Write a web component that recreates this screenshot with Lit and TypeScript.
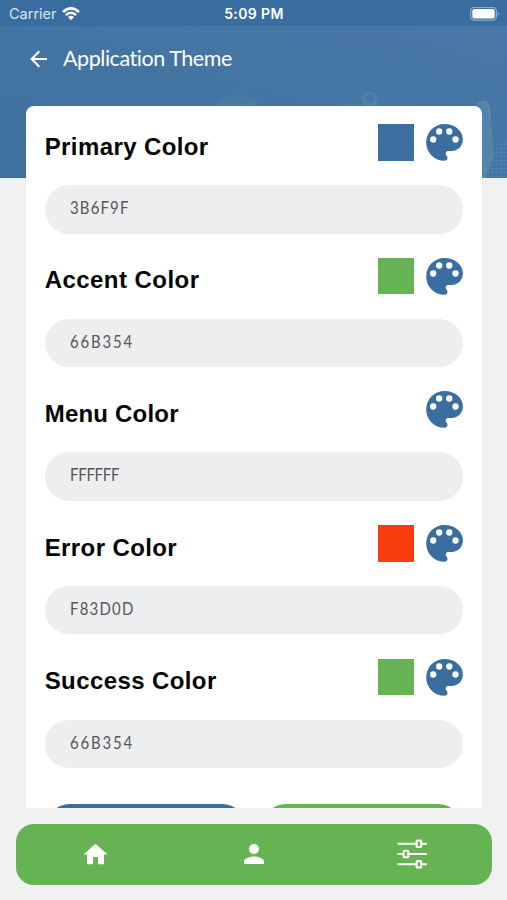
import { LitElement, html, css, svg } from "lit";
import { customElement, property } from "lit/decorators.js";

interface ColorField {
  label: string;
  value: string;
  spacing: number;
  valueSpacing: number;
}

const FIELDS: ColorField[] = [
  { label: "Primary Color", value: "3B6F9F", spacing: 0.4, valueSpacing: 1.3 },
  { label: "Accent Color", value: "66B354", spacing: 0.45, valueSpacing: 2.1 },
  { label: "Menu Color", value: "FFFFFF", spacing: 0.2, valueSpacing: -0.3 },
  { label: "Error Color", value: "F83D0D", spacing: 0.4, valueSpacing: 1.4 },
  { label: "Success Color", value: "66B354", spacing: 0.4, valueSpacing: 2.1 },
];

@customElement("color-field")
class ColorFieldRow extends LitElement {
  @property({ attribute: false }) field!: ColorField;

  static styles = css`
    :host { display: block; height: 133.6px; }
    .head { display: flex; align-items: flex-start; height: 61px; }
    .label {
      flex: 1; margin: 0; padding-top: 8.6px; white-space: nowrap;
      font: bold 24px/28px "Liberation Sans", Arial, sans-serif; color: #050505;
    }
    .swatch { width: 36.6px; height: 36.6px; margin-right: 12.2px; }
    .palette { display: block; width: 37px; height: 37px; fill: #3a6ea0; }
    .palette circle { fill: #fff; }
    .value {
      box-sizing: border-box; height: 48.4px; border-radius: 24.2px;
      background: #edeeef; padding: 11px 25px 0;
      font: 17px/24px Lato, sans-serif; color: #56575a;
    }
    .value span { display: inline-block; transform: scaleX(0.88); transform-origin: left; }
  `;

  render() {
    const f = this.field;
    return html`
      <div class="head">
        <h2 class="label" style="letter-spacing:${f.spacing}px">${f.label}</h2>
        <div class="swatch" style="background:#${f.value}"></div>
        <svg class="palette" viewBox="0 0 37 37">
          <path d="M18.5 0C28.8 0 36.9 6.6 36.9 15.5C36.9 22 32 26.9 25.7 26.9H22.6C20.3 26.9 19 28.9 20.1 30.9C20.9 32 21.5 32.9 21.5 34C21.5 35.7 20.2 36.8 18.5 36.8C8.3 36.8 0.2 28.7 0.2 18.4C0.2 8.2 8.3 0 18.5 0Z"/>
          <circle cx="7.2" cy="15.5" r="3.15"/><circle cx="13.2" cy="7.5" r="3.15"/>
          <circle cx="23.3" cy="7.5" r="3.15"/><circle cx="29.5" cy="15.5" r="3.15"/>
        </svg>
      </div>
      <div class="value"><span style="letter-spacing:${f.valueSpacing}px">${f.value}</span></div>
    `;
  }
}

const slider = (y: number, x: number) => svg`
  <path d="M1.4 ${y}H${x - 3}M${x + 3} ${y}H29"/>
  <rect x=${x - 2.3} y=${y - 3.2} width="4.6" height="6.4" rx=".8"/>`;

@customElement("app-root")
class AppRoot extends LitElement {
  static styles = css`
    :host {
      display: flex; flex-direction: column; position: relative;
      width: 507px; height: 900px; overflow: hidden; background: #f1f1f1;
    }
    .status {
      display: grid; grid-template-columns: 1fr auto 1fr; align-items: center;
      box-sizing: border-box; height: 26px; padding: 2px 7px 0 9px;
      background: #3a6d9f; color: #fff; z-index: 1;
      font: 14.5px/20px Inter, sans-serif;
    }
    .carrier { display: flex; align-items: center; gap: 5.5px; color: #dbe6f0; }
    .clock { font-weight: 600; font-size: 14px; letter-spacing: 0.4px; margin-right: 1px; }
    .battery { justify-self: end; display: block; }
    .hero { position: absolute; left: 0; top: 26px; width: 507px; height: 152px; display: block; }
    .bar {
      display: flex; align-items: center; height: 64px; padding-left: 29px; gap: 14px;
      position: relative; margin-bottom: 16px; color: #fff;
    }
    .back { display: block; }
    .title { margin: 0; font: 21.5px/28px Lato, sans-serif; white-space: nowrap; letter-spacing: -0.45px; }
    .card {
      position: relative; box-sizing: border-box; margin: 0 25px 0 26px; height: 702px;
      padding: 18.3px 18.7px 0 18.7px; border-radius: 8px 8px 0 0; background: #fff; overflow: hidden;
    }
    .actions { display: grid; grid-template-columns: 1fr 1fr; gap: 16px; margin: 12px 1.5px 0; }
    .button { height: 48px; border-radius: 24px; background: #3a6ea0; }
    .button.accent { background: #66b354; }
    .nav {
      display: grid; grid-template-columns: repeat(3, 1fr); align-items: center; justify-items: center;
      margin: 15.5px 15.5px 0 16px; height: 61.5px; border-radius: 18px; background: #66b354;
    }
    .nav svg { display: block; fill: #fff; }
    .nav .sliders { fill: none; stroke: #fff; stroke-width: 2.1; stroke-linecap: round; }
  `;

  render() {
    return html`
      <svg class="hero" viewBox="0 26 507 152">
        <defs>
          <linearGradient id="sky" x1="0" y1="1" x2="1" y2="0">
            <stop offset="0" stop-color="#3f719f"/><stop offset="1" stop-color="#4978a5"/>
          </linearGradient>
          <pattern id="grid" width="4" height="4" patternUnits="userSpaceOnUse">
            <path d="M0 0H4M0 0V4" stroke="#789cbd" stroke-width="1" opacity=".35"/>
          </pattern>
        </defs>
        <rect y="26" width="507" height="152" fill="url(#sky)"/>
        <ellipse cx="238" cy="107" rx="22" ry="12" fill="#5a87ae" opacity=".25"/>
        <path d="M362 107V98Q362 92 370 92Q378 92 378 98V107Z" fill="#5b88b0" opacity=".5"/>
        <circle cx="370" cy="98" r="4" fill="#4776a4"/>
        <circle cx="352" cy="106" r="5" fill="#6592b7" opacity=".2"/>
        <path d="M476 178V104Q486 97 490 108L494 155L486 178Z" fill="#5b88b0" opacity=".65"/>
        <path d="M478 104Q486 98 489 108L490 118" fill="none" stroke="#7ba1c1" stroke-width="1.5" opacity=".35"/>
        <path d="M490 156L499 140H507V178H482V166Z" fill="url(#grid)"/>
      </svg>
      <div class="status">
        <span class="carrier">Carrier
          <svg width="18" height="14" viewBox="0 0 18 14" fill="none" stroke="#fff" stroke-width="2.6">
            <path d="M1 5.1Q9-2.2 17 5.1M3.9 8.1Q9 3.4 14.1 8.1"/>
            <path d="M6 10.1Q9 7.6 12 10.1L9 13.2Z" fill="#fff" stroke="none"/>
          </svg>
        </span>
        <span class="clock">5:09 PM</span>
        <svg class="battery" width="30" height="15" viewBox="0 0 30 15">
          <rect x=".6" y=".4" width="25.8" height="12.8" rx="3.6" fill="none" stroke="#8fadca" stroke-width="1.2"/>
          <rect x="2.3" y="2" width="22.4" height="9.6" rx="2.2" fill="#fff"/>
          <path d="M27.6 4.7Q30.6 6.8 27.6 8.9Z" fill="#8fadca"/>
        </svg>
      </div>
      <div class="bar">
        <svg class="back" width="20" height="20" viewBox="0 0 20 20" fill="none" stroke="#fff" stroke-width="2">
          <path d="M18 11H3M10.3 3.3L2.7 11L10.3 18.7"/>
        </svg>
        <h1 class="title">Application Theme</h1>
      </div>
      <div class="card">
        ${FIELDS.map((f) => html`<color-field .field=${f}></color-field>`)}
        <div class="actions">
          <div class="button"></div>
          <div class="button accent"></div>
        </div>
      </div>
      <div class="nav">
        <svg width="29" height="29" viewBox="0 0 24 24"><path d="M10 20v-6h4v6h5v-8h3L12 3 2 12h3v8z"/></svg>
        <svg width="30" height="30" viewBox="0 0 24 24"><path d="M12 12c2.21 0 4-1.79 4-4s-1.79-4-4-4-4 1.79-4 4 1.79 4 4 4zm0 2c-2.67 0-8 1.34-8 4v2h16v-2c0-2.66-5.33-4-8-4z"/></svg>
        <svg class="sliders" width="30" height="30" viewBox="0 0 30 30">
          ${slider(4.8, 21.9)}${slider(15, 9)}${slider(25.3, 21.9)}
        </svg>
      </div>
    `;
  }
}
